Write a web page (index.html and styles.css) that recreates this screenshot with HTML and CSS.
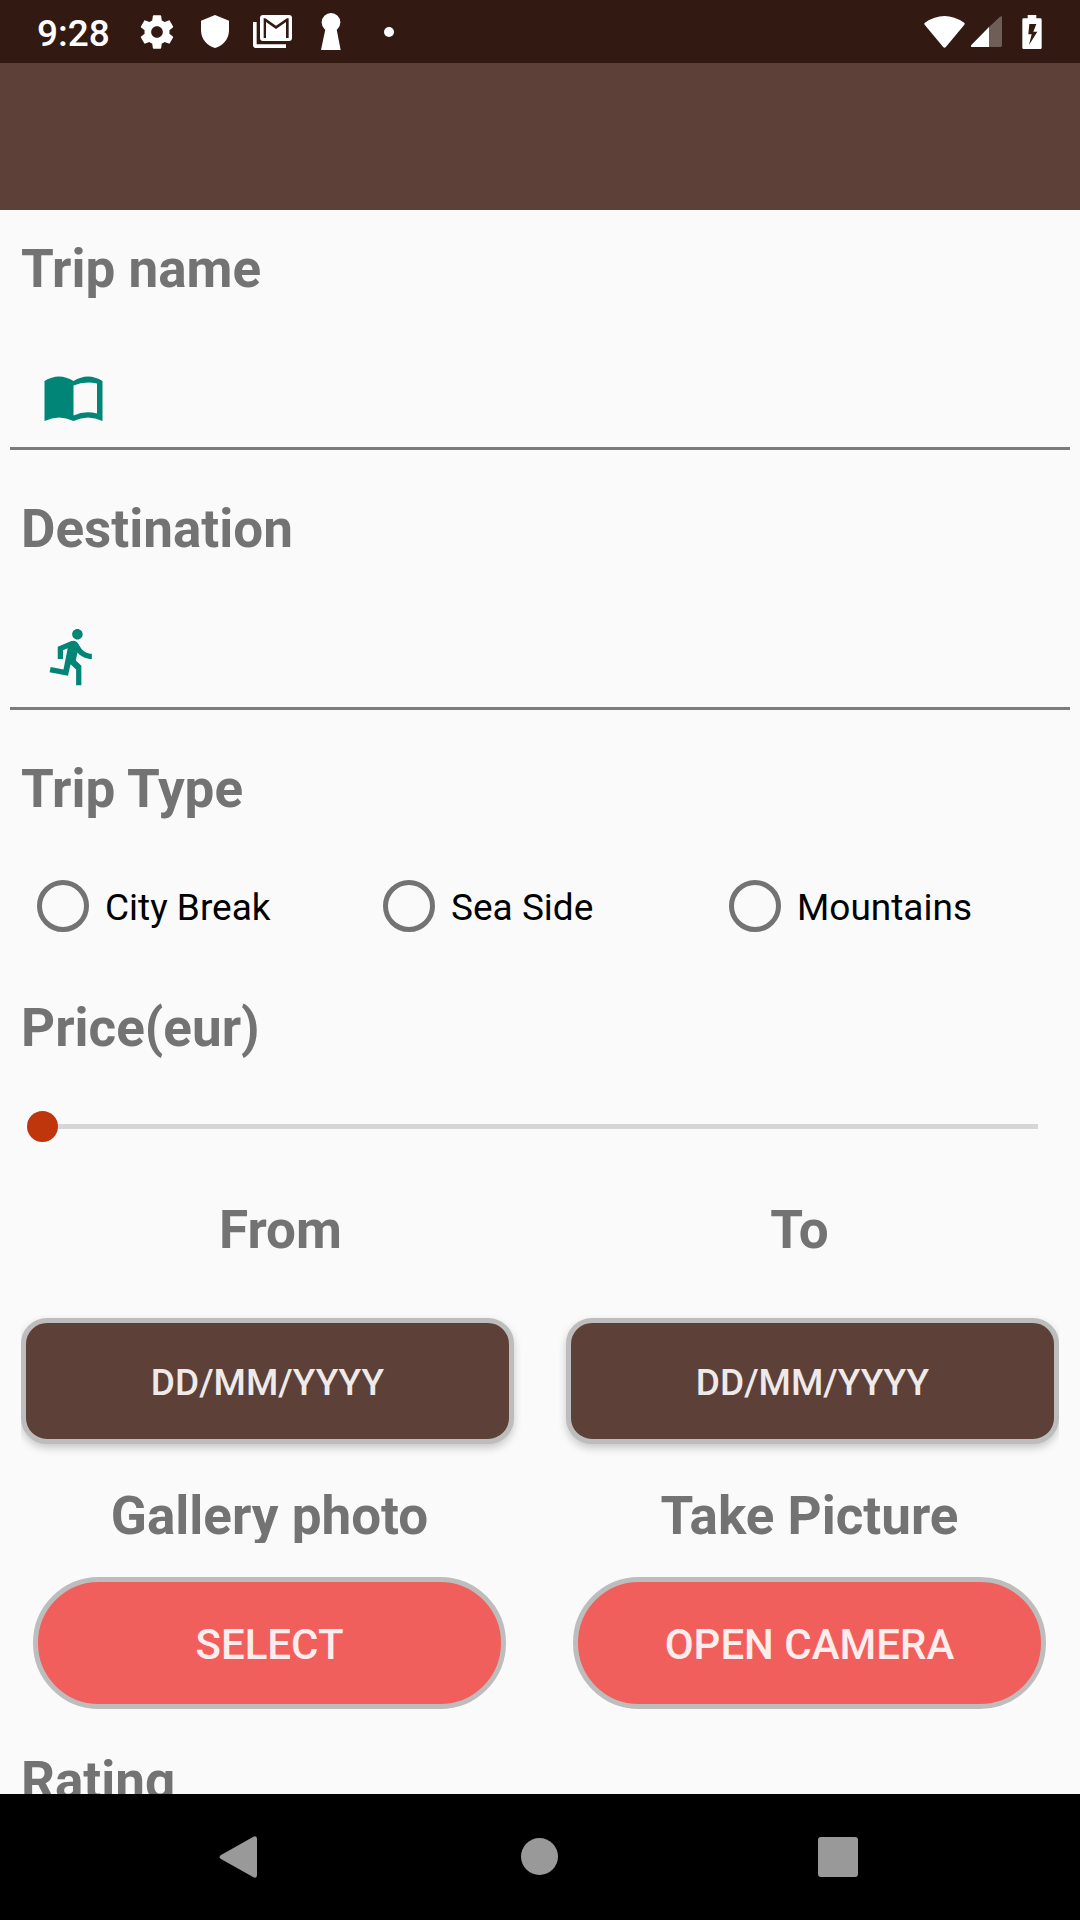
FILE: index.html
```html
<!DOCTYPE html>
<html lang="en">
<head>
  <meta charset="utf-8">
  <meta name="viewport" content="width=device-width, initial-scale=1">
  <title>Add trip</title>
  <link rel="stylesheet" href="styles.css">
</head>
<body>
  <div class="status-bar">
    <span class="clock">9:28</span>
    <svg class="status-icon icon-gear" viewBox="0 0 24 24" aria-hidden="true"><path d="M19.43 12.98c.04-.32.07-.64.07-.98s-.03-.66-.07-.98l2.11-1.65c.19-.15.24-.42.12-.64l-2-3.46c-.12-.22-.39-.3-.61-.22l-2.49 1c-.52-.4-1.08-.73-1.69-.98l-.38-2.65C14.46 2.18 14.25 2 14 2h-4c-.25 0-.46.18-.49.42l-.38 2.65c-.61.25-1.17.59-1.69.98l-2.49-1c-.23-.09-.49 0-.61.22l-2 3.46c-.13.22-.07.49.12.64l2.11 1.65c-.04.32-.07.65-.07.98s.03.66.07.98l-2.11 1.65c-.19.15-.24.42-.12.64l2 3.46c.12.22.39.3.61.22l2.49-1c.52.4 1.08.73 1.69.98l.38 2.65c.03.24.24.42.49.42h4c.25 0 .46-.18.49-.42l.38-2.65c.61-.25 1.17-.59 1.69-.98l2.49 1c.23.09.49 0 .61-.22l2-3.46c.12-.22.07-.49-.12-.64l-2.11-1.65zM12 15.500c-1.930 0-3.500-1.570-3.500-3.500s1.570-3.500 3.500-3.500 3.500 1.570 3.500 3.500-1.570 3.500-3.500 3.500z"/></svg>
    <svg class="status-icon icon-shield" viewBox="0 0 84 99" aria-hidden="true"><path d="M42 0L84 17V45C84 73 66 92 42 99C18 92 0 73 0 45V17Z"/></svg>
    <svg class="status-icon icon-mail" viewBox="0 0 117 99" aria-hidden="true"><path d="M0 21h11v67h88v11H9q-9 0-9-9z"/><path fill-rule="evenodd" d="M30 0h78q9 0 9 9v60q0 9-9 9H30q-9 0-9-9V9q0-9 9-9zM32 10v59h7V21l30 21 30-21v48h8V10h-5L69 32 37 10z"/><path d="M41 69V42l28 18 28-18v27z" fill-opacity=".8"/></svg>
    <svg class="status-icon icon-keyhole" viewBox="0 0 60 111" aria-hidden="true"><circle cx="30" cy="28" r="28"/><path d="M14 44h32l13 67H0z"/></svg>
    <svg class="status-icon icon-dot" viewBox="0 0 10 10" aria-hidden="true"><circle cx="5" cy="5" r="5"/></svg>
    <span class="status-spacer"></span>
    <svg class="status-icon icon-wifi" viewBox="0 0 122 96" aria-hidden="true"><path d="M2 20Q61-20 120 20Q123 23 120 27L65 93Q61 97 57 93L2 27Q-1 23 2 20z"/></svg>
    <svg class="status-icon icon-signal" viewBox="0 0 93 93" aria-hidden="true"><path d="M54 33L87 2Q93-2 93 5V88Q93 93 88 93H54z" fill-opacity=".3"/><path d="M54 33V93H3Q-2 93 1 87z"/></svg>
    <svg class="status-icon icon-battery" viewBox="0 0 58 102" aria-hidden="true"><path fill-rule="evenodd" d="M16 0h26v10h12q4 0 4 4v84q0 4-4 4H4q-4 0-4-4V14q0-4 4-4h12zM21 27L18 58h10L20 90 45 50H33L42 27z"/></svg>
  </div>

  <header class="app-bar"></header>

  <main class="trip-form">
    <label class="heading" for="trip-name">Trip name</label>
    <div class="field">
      <svg class="field-icon" viewBox="0 0 63 63" aria-hidden="true"><path fill-rule="evenodd" d="M2.500 16Q17 7 31.500 16Q46 7 60.500 16V56Q46 49 31.500 56Q17 49 2.500 56zM31.500 20.500V50.500Q43 45 55 48.500V18.500Q43 15.500 31.500 20.500z"/></svg>
      <input class="field-input" id="trip-name" type="text">
    </div>

    <label class="heading" for="destination">Destination</label>
    <div class="field">
      <svg class="field-icon" viewBox="0 0 24 24" aria-hidden="true"><path d="M13.490 5.480c1.100 0 2-.9 2-2s-.9-2-2-2-2 .9-2 2 .9 2 2 2zm-3.600 13.900l1-4.400 2.100 2v6h2v-7.500l-2.100-2 .6-3c1.300 1.500 3.300 2.500 5.500 2.500v-2c-1.900 0-3.500-1-4.300-2.400l-1-1.600c-.4-.6-1-1-1.700-1-.3 0-.5.1-.8.1l-5.200 2.200v4.700h2v-3.400l1.800-.7-1.600 8.100-4.900-1-.4 2 7 1.400z"/></svg>
      <input class="field-input" id="destination" type="text">
    </div>

    <h2 class="heading" id="trip-type">Trip Type</h2>
    <div class="radio-group" role="radiogroup" aria-labelledby="trip-type">
      <label class="radio"><input class="radio-input" type="radio" name="type"><span class="radio-text">City Break</span></label>
      <label class="radio"><input class="radio-input" type="radio" name="type"><span class="radio-text">Sea Side</span></label>
      <label class="radio"><input class="radio-input" type="radio" name="type"><span class="radio-text">Mountains</span></label>
    </div>

    <label class="heading" for="price">Price(eur)</label>
    <input class="slider" id="price" type="range" min="0" max="1000" value="0">

    <div class="dates">
      <h2 class="date-heading" id="from">From</h2>
      <h2 class="date-heading" id="to">To</h2>
      <button class="button date-button date-from" type="button" aria-describedby="from">DD/MM/YYYY</button>
      <button class="button date-button date-to" type="button" aria-describedby="to">DD/MM/YYYY</button>
    </div>

    <div class="photos">
      <div class="photo">
        <h2 class="photo-heading">Gallery photo</h2>
        <button class="button photo-button" type="button">SELECT</button>
      </div>
      <div class="photo">
        <h2 class="photo-heading">Take Picture</h2>
        <button class="button photo-button" type="button">OPEN CAMERA</button>
      </div>
    </div>

    <h2 class="heading">Rating</h2>
  </main>

  <nav class="nav-bar">
    <button class="nav-button" type="button" aria-label="Back"><svg class="nav-icon" viewBox="0 0 42 42" aria-hidden="true"><path d="M2 19L34 1Q38-1 38 3V39Q38 43 34 41L2 23Q-1 21 2 19z"/></svg></button>
    <button class="nav-button" type="button" aria-label="Home"><svg class="nav-icon" viewBox="0 0 42 42" aria-hidden="true"><circle cx="20.500" cy="20.500" r="18.500"/></svg></button>
    <button class="nav-button" type="button" aria-label="Recent apps"><svg class="nav-icon" viewBox="0 0 42 42" aria-hidden="true"><rect x="-1" y="1" width="40" height="40" rx="3"/></svg></button>
  </nav>
</body>
</html>
```

FILE: styles.css
```css
* {
  box-sizing: border-box;
}

body {
  margin: 0;
  height: 100vh;
  display: flex;
  flex-direction: column;
  overflow: hidden;
  background: #fafafa;
  color: #000;
  font-family: Roboto, "Liberation Sans", sans-serif;
  font-size: 37px;
  line-height: 44px;
}

/* System status bar */
.status-bar {
  flex: none;
  display: flex;
  align-items: center;
  height: 63px;
  padding: 0 38px 0 37px;
  background: #321911;
  color: #fff;
}

.clock {
  width: 100px;
  padding-top: 4px;
  font-weight: 500;
}

.status-icon {
  flex: none;
  fill: #fff;
}

.icon-gear {
  width: 40px;
  height: 40px;
}

.icon-shield {
  width: 28px;
  height: 33px;
  margin-left: 24px;
}

.icon-mail {
  width: 39px;
  height: 33px;
  margin-left: 24px;
}

.icon-keyhole {
  width: 20px;
  height: 37px;
  margin-left: 29px;
}

.icon-dot {
  width: 10px;
  height: 10px;
  margin-left: 43px;
}

.status-spacer {
  flex: 1;
}

.icon-wifi {
  width: 41px;
  height: 32px;
}

.icon-signal {
  width: 31px;
  height: 31px;
  margin-left: 6px;
}

.icon-battery {
  width: 20px;
  height: 34px;
  margin-left: 20px;
}

.app-bar {
  flex: none;
  height: 147px;
  background: #5d4037;
}

/* Form */
.trip-form {
  flex: 1;
  min-height: 0;
  overflow: hidden;
  padding-top: 28px;
}

.heading,
.date-heading,
.photo-heading {
  display: block;
  margin: 0;
  color: #737373;
  font-size: 53px;
  font-weight: 700;
  line-height: 62px;
}

.heading {
  padding: 0 21px;
}

.field {
  display: flex;
  align-items: center;
  margin: 0 10px 48px;
  padding: 65px 32px 19px;
  border-bottom: 3px solid #7c7c7c;
}

.field-icon {
  flex: none;
  width: 63px;
  height: 63px;
  fill: #008577;
}

.field-input {
  flex: 1;
  min-width: 0;
  height: 63px;
  padding: 0 16px;
  border: 0;
  outline: 0;
  background: none;
  font: inherit;
}

.radio-group {
  display: grid;
  grid-template-columns: repeat(3, 1fr);
  padding: 60px 21px 65px;
}

.radio {
  display: flex;
  align-items: center;
  gap: 16px;
  height: 52px;
  padding-left: 16px;
}

.radio-input {
  appearance: none;
  flex: none;
  width: 52px;
  height: 52px;
  margin: 0;
  border: 5px solid #737373;
  border-radius: 50%;
}

.radio-input:checked {
  background: radial-gradient(#008577 45%, transparent 50%);
}

.radio-text {
  padding-top: 3px;
}

.slider {
  appearance: none;
  display: block;
  width: calc(100% - 54px);
  height: 31px;
  margin: 52px 27px 57px;
  background: linear-gradient(#d6d6d6, #d6d6d6) center / calc(100% - 31px) 5px no-repeat;
}

.slider::-webkit-slider-thumb {
  appearance: none;
  width: 31px;
  height: 31px;
  border: 0;
  border-radius: 50%;
  background: #bf360c;
}

.slider::-moz-range-thumb {
  width: 31px;
  height: 31px;
  border: 0;
  border-radius: 50%;
  background: #bf360c;
}

.dates {
  display: grid;
  grid-template-columns: 1fr 1fr;
  row-gap: 57px;
  margin: 0 21px;
  padding-bottom: 41px;
  overflow: hidden;
}

.date-heading,
.photo-heading {
  text-align: center;
}

.button {
  border: 5px solid #bdbdbd;
  padding: 3px 0 0;
  font-family: inherit;
  font-weight: 500;
}

.date-button {
  height: 126px;
  border-radius: 26px;
  background: #5d4037;
  box-shadow: 0 4px 8px rgba(0, 0, 0, 0.2);
  color: #eeeae9;
  font-size: 37px;
  line-height: 44px;
}

.date-from {
  margin-right: 26px;
}

.date-to {
  margin-left: 26px;
}

.photos {
  display: grid;
  grid-template-columns: 1fr 1fr;
  margin-bottom: 41px;
}

.photo {
  display: flex;
  flex-direction: column;
  gap: 34px;
  padding: 0 34px 0 33px;
}

/* The row is slightly shorter than its text, which trims the descenders */
.photo-heading {
  height: 58px;
  overflow: hidden;
}

.photo-button {
  height: 132px;
  border-radius: 66px;
  background: #f05f5c;
  color: #ffeded;
  font-size: 42px;
  line-height: 50px;
}

/* System navigation bar */
.nav-bar {
  flex: none;
  display: flex;
  justify-content: center;
  height: 126px;
  background: #000;
}

.nav-button {
  display: flex;
  align-items: center;
  justify-content: center;
  width: 300px;
  padding: 0;
  border: 0;
  background: none;
}

.nav-icon {
  width: 42px;
  height: 42px;
  overflow: visible;
  fill: #999;
}
```
